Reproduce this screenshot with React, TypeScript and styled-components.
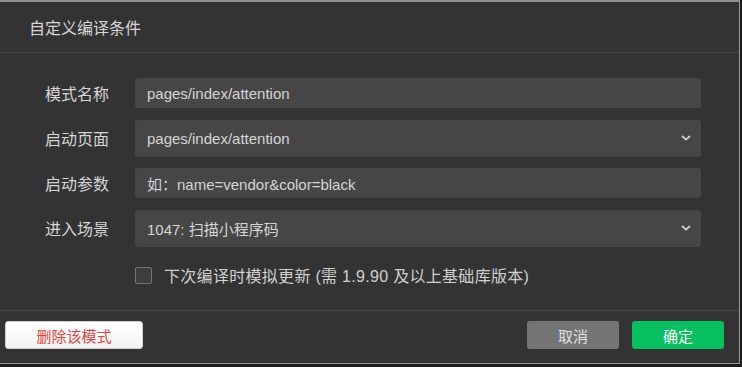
import React, { useState } from 'react';
import styled, { createGlobalStyle } from 'styled-components';

const GlobalStyle = createGlobalStyle`
  html, body {
    margin: 0;
    padding: 0;
    background: #1c1c1c;
    font-family: "Liberation Sans", "Noto Sans CJK SC", sans-serif;
  }
  * {
    box-sizing: border-box;
  }
`;

interface Field {
  label: string;
  value: string;
  select?: boolean;
}

const fields: Field[] = [
  { label: '模式名称', value: 'pages/index/attention' },
  { label: '启动页面', value: 'pages/index/attention', select: true },
  { label: '启动参数', value: '如：name=vendor&color=black' },
  { label: '进入场景', value: '1047: 扫描小程序码', select: true },
];

const Chevron = () => (
  <svg width="10" height="6" viewBox="0 0 10 6">
    <path d="M1 1l4 3.6L9 1" fill="none" stroke="#d0d0d0" strokeWidth="1.8" />
  </svg>
);

const App: React.FC = () => {
  const [checked, setChecked] = useState(false);

  return (
    <>
      <GlobalStyle />
      <Dialog>
        <Header>自定义编译条件</Header>
        <Body>
          {fields.map((f) => (
            <Row key={f.label}>
              <Label>{f.label}</Label>
              <Control tall={!!f.select}>
                <span>{f.value}</span>
                {f.select && <Chevron />}
              </Control>
            </Row>
          ))}
          <CheckRow onClick={() => setChecked(!checked)}>
            <CheckBox checked={checked} />
            <CheckText>下次编译时模拟更新 (需 1.9.90 及以上基础库版本)</CheckText>
          </CheckRow>
        </Body>
        <Footer>
          <DeleteButton>删除该模式</DeleteButton>
          <Actions>
            <ActionButton variant="cancel">取消</ActionButton>
            <ActionButton variant="confirm">确定</ActionButton>
          </Actions>
        </Footer>
      </Dialog>
    </>
  );
};

const Dialog = styled.div`
  width: 740px;
  height: 364px;
  background: #333333;
  border-top: 2px solid #8e8e8e;
  border-right: 1px solid #9a9a9a;
  border-bottom: 1px solid #9a9a9a;
  display: flex;
  flex-direction: column;
`;

const Header = styled.div`
  height: 51px;
  padding-left: 29px;
  display: flex;
  align-items: center;
  font-size: 16px;
  color: #d8d8d8;
  border-bottom: 1px solid #474747;
`;

const Body = styled.div`
  flex: 1;
  padding: 25px 38px 0 45px;
  display: flex;
  flex-direction: column;
  gap: 11.5px;
  border-bottom: 1px solid #474747;
`;

const Row = styled.div`
  display: grid;
  grid-template-columns: 90px 1fr;
  align-items: center;
`;

const Label = styled.div`
  font-size: 16px;
  color: #d6d6d6;
`;

const Control = styled.div<{ tall: boolean }>`
  height: ${({ tall }) => (tall ? 37 : 30)}px;
  background: #464646;
  border-radius: 3px;
  padding: 0 10px 0 12px;
  display: flex;
  align-items: center;
  justify-content: space-between;
  font-size: 15px;
  color: #d6d6d6;
`;

const CheckRow = styled.div`
  margin-top: 5px;
  margin-left: 90px;
  display: flex;
  align-items: center;
  gap: 12px;
  cursor: pointer;
`;

const CheckBox = styled.span<{ checked: boolean }>`
  width: 17px;
  height: 17px;
  border: 1px solid #777;
  border-radius: 2px;
  background: ${({ checked }) => (checked ? '#07c160' : '#3d3d3d')};
`;

const CheckText = styled.span`
  font-size: 16px;
  letter-spacing: 0.3px;
  color: #d0d0d0;
`;

const Footer = styled.div`
  height: 52px;
  padding: 10px 15px 0 5px;
  display: flex;
  justify-content: space-between;
  align-items: flex-start;
`;

const DeleteButton = styled.button`
  width: 138px;
  height: 28px;
  border: 1px solid #d0d0d0;
  border-radius: 3px;
  background: linear-gradient(#ffffff, #f3f3f3);
  color: #e64340;
  font-family: inherit;
  font-size: 15px;
`;

const Actions = styled.div`
  display: flex;
  gap: 13px;
`;

const ActionButton = styled.button<{ variant: 'cancel' | 'confirm' }>`
  width: 92px;
  height: 28px;
  border: none;
  border-radius: 3px;
  background: ${({ variant }) => (variant === 'confirm' ? '#07c160' : '#747474')};
  color: ${({ variant }) => (variant === 'confirm' ? '#ffffff' : '#e0e0e0')};
  font-family: inherit;
  font-size: 15px;
`;

export default App;
